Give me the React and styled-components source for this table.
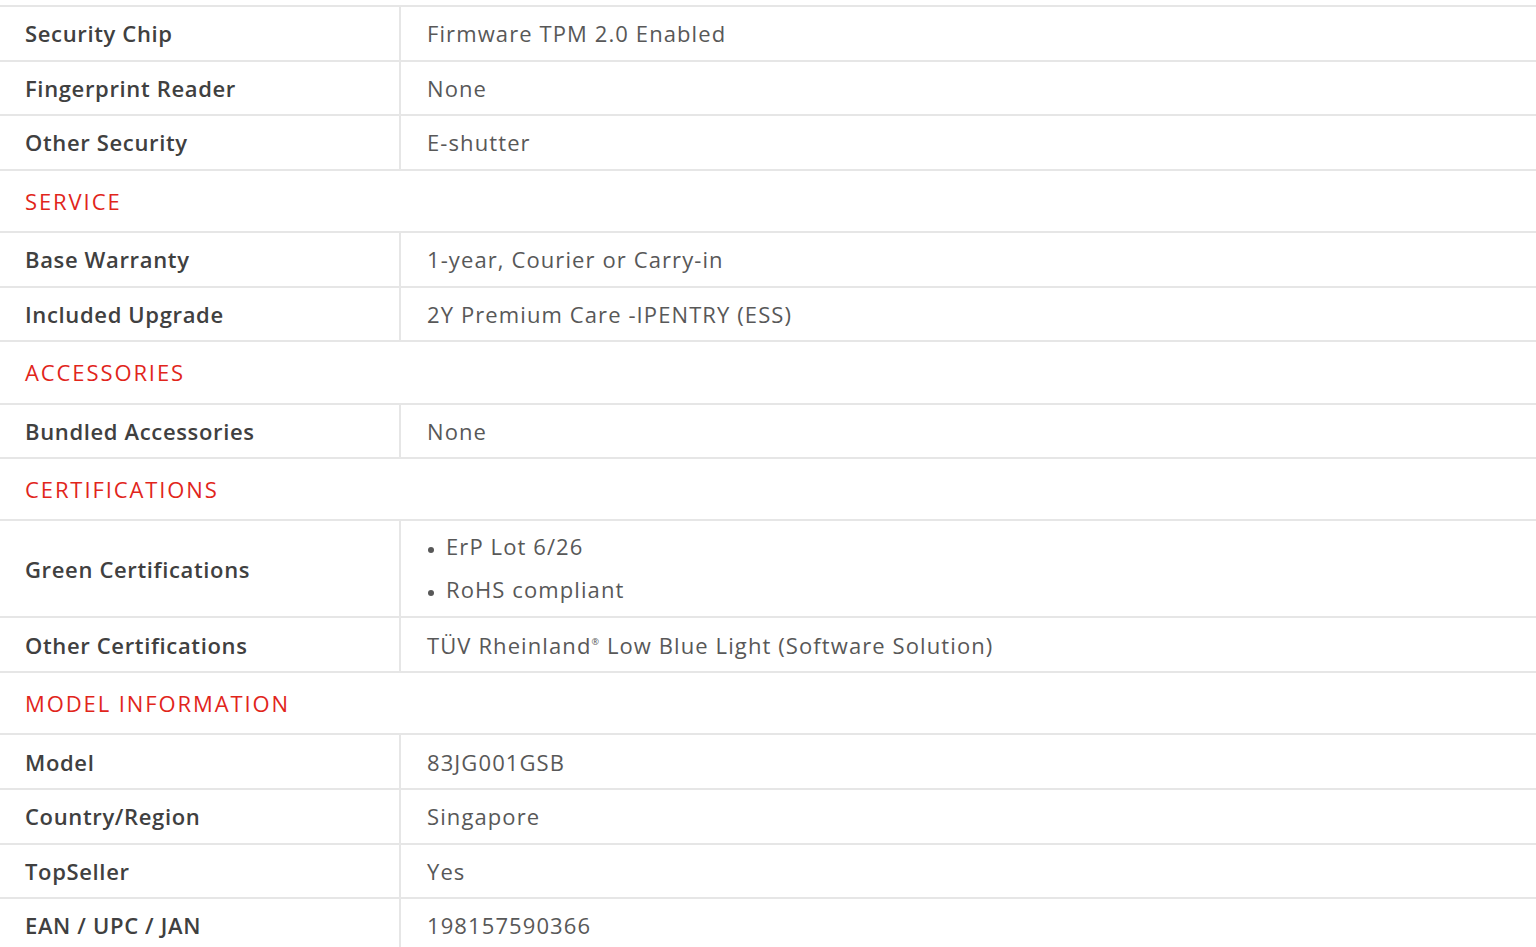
import React from 'react';
import styled, { createGlobalStyle } from 'styled-components';

const GlobalStyle = createGlobalStyle`
  body {
    margin: 0;
    background: #ffffff;
    font-family: "Open Sans", "Noto Sans", sans-serif;
  }
`;

const Wrapper = styled.div`
  padding-top: 5px;
  width: 1536px;
`;

const Table = styled.table`
  width: 100%;
  border-collapse: collapse;
  border-top: 2px solid #e6e6e6;
`;

const Row = styled.tr`
  border-bottom: 2px solid #e6e6e6;
`;

const Label = styled.td`
  width: 374px;
  height: 52.6px;
  padding: 0 0 0 25px;
  border-right: 2px solid #e6e6e6;
  font-size: 22px;
  font-weight: 600;
  letter-spacing: 0.65px;
  color: #404040;
  vertical-align: middle;
`;

const Value = styled.td`
  padding: 0 0 0 26px;
  font-size: 22px;
  font-weight: 400;
  color: #585858;
  letter-spacing: 1.1px;
  vertical-align: middle;
`;

const Section = styled.td`
  height: 60.3px;
  padding: 0 0 0 25px;
  font-size: 22px;
  letter-spacing: 1.9px;
  color: #e1251b;
  vertical-align: middle;
`;

const List = styled.ul`
  margin: 0;
  padding: 11px 0 12px 19px;
  display: flex;
  flex-direction: column;
  gap: 14px;
`;

const Item = styled.li`
  line-height: 29px;
  &::marker {
    font-size: 16px;
  }
`;

const Sup = styled.sup`
  font-size: 9px;
  vertical-align: 9px;
`;

const rows = [
  { label: 'Security Chip', value: 'Firmware TPM 2.0 Enabled' },
  { label: 'Fingerprint Reader', value: 'None' },
  { label: 'Other Security', value: 'E-shutter' },
  { section: 'SERVICE' },
  { label: 'Base Warranty', value: '1-year, Courier or Carry-in' },
  { label: 'Included Upgrade', value: '2Y Premium Care -IPENTRY (ESS)' },
  { section: 'ACCESSORIES' },
  { label: 'Bundled Accessories', value: 'None' },
  { section: 'CERTIFICATIONS' },
  { label: 'Green Certifications', list: ['ErP Lot 6/26', 'RoHS compliant'] },
  {
    label: 'Other Certifications',
    value: (
      <>
        TÜV Rheinland<Sup>®</Sup> Low Blue Light (Software Solution)
      </>
    ),
  },
  { section: 'MODEL INFORMATION' },
  { label: 'Model', value: '83JG001GSB' },
  { label: 'Country/Region', value: 'Singapore' },
  { label: 'TopSeller', value: 'Yes' },
  { label: 'EAN / UPC / JAN', value: '198157590366' },
];

export default function App() {
  return (
    <Wrapper>
      <GlobalStyle />
      <Table>
        <tbody>
          {rows.map((r, i) =>
            r.section ? (
              <Row key={i}>
                <Section colSpan={2}>{r.section}</Section>
              </Row>
            ) : (
              <Row key={i}>
                <Label>{r.label}</Label>
                <Value>
                  {r.list ? (
                    <List>
                      {r.list.map((t) => (
                        <Item key={t}>{t}</Item>
                      ))}
                    </List>
                  ) : (
                    r.value
                  )}
                </Value>
              </Row>
            )
          )}
        </tbody>
      </Table>
    </Wrapper>
  );
}
